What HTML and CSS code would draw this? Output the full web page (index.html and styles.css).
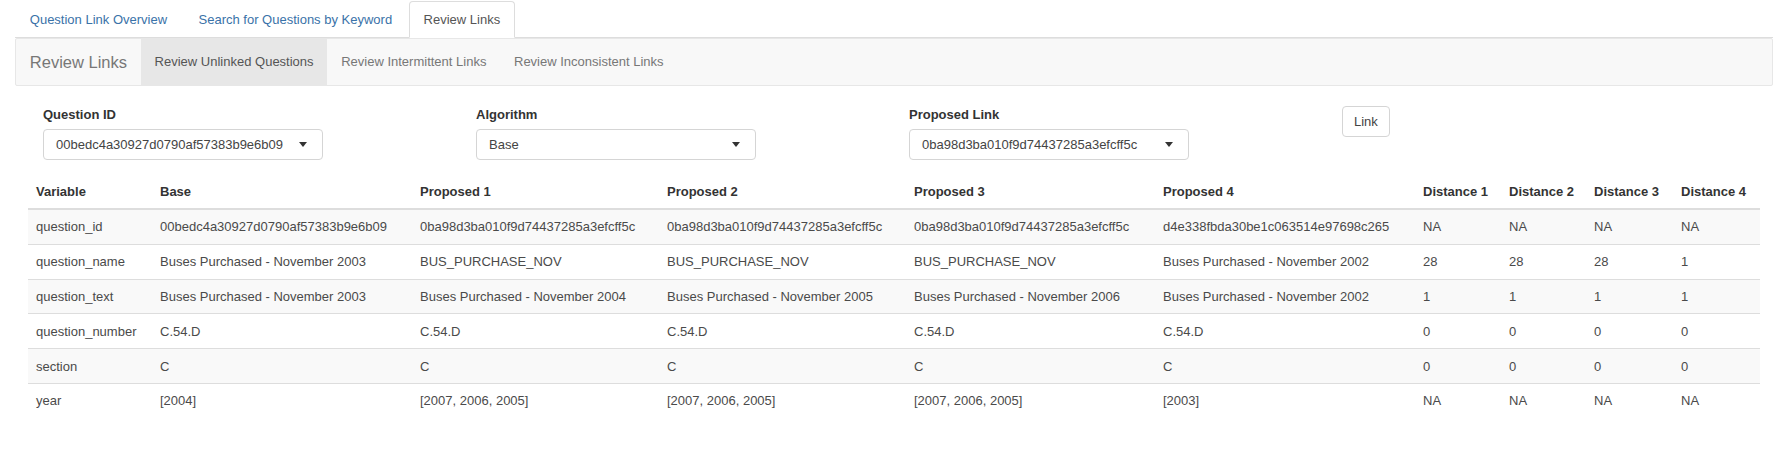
FILE: index.html
```html
<!DOCTYPE html>
<html>
<head>
<meta charset="utf-8">
<title>Review Links</title>
<link rel="stylesheet" href="styles.css">
</head>
<body>
<div class="page">
  <ul class="tabs">
    <li class="tab"><a>Question Link Overview</a></li>
    <li class="tab"><a>Search for Questions by Keyword</a></li>
    <li class="tab active"><a>Review Links</a></li>
  </ul>
  <nav class="navbar">
    <span class="brand">Review Links</span>
    <ul class="nav">
      <li class="nav-item active"><a>Review Unlinked Questions</a></li>
      <li class="nav-item"><a>Review Intermittent Links</a></li>
      <li class="nav-item"><a>Review Inconsistent Links</a></li>
    </ul>
  </nav>
  <div class="content">
    <div class="form-row">
      <div class="form-group">
        <label class="label">Question ID</label>
        <div class="select"><span>00bedc4a30927d0790af57383b9e6b09</span><i class="caret"></i></div>
      </div>
      <div class="form-group">
        <label class="label">Algorithm</label>
        <div class="select"><span>Base</span><i class="caret"></i></div>
      </div>
      <div class="form-group">
        <label class="label">Proposed Link</label>
        <div class="select"><span>0ba98d3ba010f9d74437285a3efcff5c</span><i class="caret"></i></div>
      </div>
      <div class="form-group">
        <button class="btn">Link</button>
      </div>
    </div>
    <table class="table">
      <colgroup>
        <col class="c-var"><col class="c-base"><col class="c-p1"><col class="c-p2"><col class="c-p3"><col class="c-p4"><col class="c-d1"><col class="c-d2"><col class="c-d3"><col class="c-d4">
      </colgroup>
      <thead>
        <tr><th>Variable</th><th>Base</th><th>Proposed 1</th><th>Proposed 2</th><th>Proposed 3</th><th>Proposed 4</th><th>Distance 1</th><th>Distance 2</th><th>Distance 3</th><th>Distance 4</th></tr>
      </thead>
      <tbody>
        <tr><td>question_id</td><td>00bedc4a30927d0790af57383b9e6b09</td><td>0ba98d3ba010f9d74437285a3efcff5c</td><td>0ba98d3ba010f9d74437285a3efcff5c</td><td>0ba98d3ba010f9d74437285a3efcff5c</td><td>d4e338fbda30be1c063514e97698c265</td><td>NA</td><td>NA</td><td>NA</td><td>NA</td></tr>
        <tr><td>question_name</td><td>Buses Purchased - November 2003</td><td>BUS_PURCHASE_NOV</td><td>BUS_PURCHASE_NOV</td><td>BUS_PURCHASE_NOV</td><td>Buses Purchased - November 2002</td><td>28</td><td>28</td><td>28</td><td>1</td></tr>
        <tr><td>question_text</td><td>Buses Purchased - November 2003</td><td>Buses Purchased - November 2004</td><td>Buses Purchased - November 2005</td><td>Buses Purchased - November 2006</td><td>Buses Purchased - November 2002</td><td>1</td><td>1</td><td>1</td><td>1</td></tr>
        <tr><td>question_number</td><td>C.54.D</td><td>C.54.D</td><td>C.54.D</td><td>C.54.D</td><td>C.54.D</td><td>0</td><td>0</td><td>0</td><td>0</td></tr>
        <tr><td>section</td><td>C</td><td>C</td><td>C</td><td>C</td><td>C</td><td>0</td><td>0</td><td>0</td><td>0</td></tr>
        <tr><td>year</td><td>[2004]</td><td>[2007, 2006, 2005]</td><td>[2007, 2006, 2005]</td><td>[2007, 2006, 2005]</td><td>[2003]</td><td>NA</td><td>NA</td><td>NA</td><td>NA</td></tr>
      </tbody>
    </table>
  </div>
</div>
</body>
</html>
```
FILE: styles.css
```css
* { box-sizing: border-box; }
html, body { margin: 0; padding: 0; background: #fff; }
body {
  font-family: "Liberation Sans", Arial, sans-serif;
  font-size: 13px;
  color: #333;
}
.page { padding: 1px 15px 0 15px; }

/* top tabs */
.tabs {
  list-style: none;
  margin: 0;
  padding: 0;
  display: flex;
  border-bottom: 1px solid #ddd;
}
.tab { margin-bottom: -1px; }
.tab a {
  display: block;
  padding: 8.5px 13.8px;
  line-height: 18px;
  margin-right: 1.84px;
  border: 1px solid transparent;
  border-radius: 4px 4px 0 0;
  color: #3a72a8;
}
.tab.active a {
  color: #555;
  background: #fff;
  border-color: #ddd #ddd transparent #ddd;
}

/* navbar */
.navbar {
  display: flex;
  min-height: 48px;
  background: #f8f8f8;
  border: 1px solid #e7e7e7;
  border-radius: 2px;
  margin-bottom: 20px;
}
.brand {
  padding: 13.8px;
  font-size: 16.5px;
  line-height: 18.4px;
  color: #777;
}
.nav { list-style: none; margin: 0; padding: 0; display: flex; }
.nav-item a {
  display: block;
  padding: 13.8px;
  line-height: 18.4px;
  color: #777;
}
.nav-item.active a { background: #e7e7e7; color: #555; }

/* content */
.content { padding: 0 13px; }
.form-row {
  display: grid;
  grid-template-columns: repeat(4, 433px);
}
.form-group { padding: 0 15px; margin-bottom: 15px; }
.label {
  display: block;
  font-weight: bold;
  line-height: 18.4px;
  margin-bottom: 4.6px;
  color: #333;
}
.select {
  width: 280px;
  height: 31px;
  border: 1px solid #d5d5d5;
  border-radius: 4px;
  display: flex;
  align-items: center;
  justify-content: space-between;
  padding: 0 15px 0 12px;
  color: #444;
  background: #fff;
}
.caret {
  width: 0;
  height: 0;
  border-left: 4.5px solid transparent;
  border-right: 4.5px solid transparent;
  border-top: 5px solid #333;
}
.btn {
  height: 31px;
  padding: 0 11px;
  font-family: inherit;
  font-size: 13px;
  color: #444;
  background: #fff;
  border: 1px solid #d5d5d5;
  border-radius: 4px;
}

/* table */
.table {
  width: 1732px;
  table-layout: fixed;
  border-collapse: separate;
  border-spacing: 0;
}
.c-var { width: 124px; }
.c-base { width: 260px; }
.c-p1 { width: 247px; }
.c-p2 { width: 247px; }
.c-p3 { width: 249px; }
.c-p4 { width: 260px; }
.c-d1 { width: 86px; }
.c-d2 { width: 85px; }
.c-d3 { width: 87px; }
.c-d4 { width: 87px; }
.table th {
  text-align: left;
  font-weight: bold;
  padding: 7px 8px;
  line-height: 19px;
  border-bottom: 2px solid #ddd;
  vertical-align: bottom;
  white-space: nowrap;
  color: #333;
}
.table td {
  padding: 7.4px 8px;
  line-height: 19px;
  border-top: 1px solid #ddd;
  white-space: nowrap;
  color: #4a4a4a;
}
.table tbody tr:first-child td { border-top: 0; }
.table tbody tr:nth-child(odd) td { background: #f9f9f9; }
```
